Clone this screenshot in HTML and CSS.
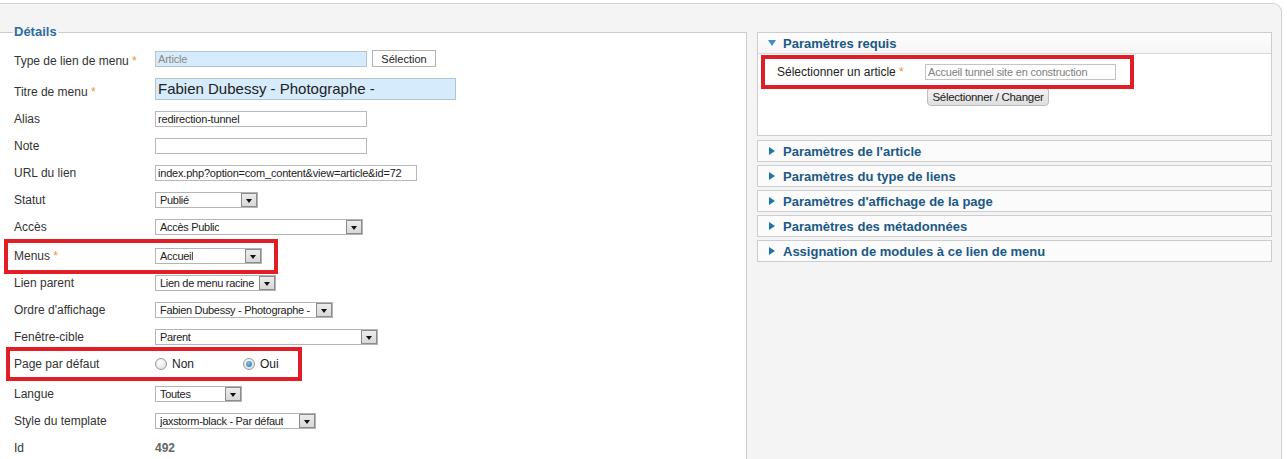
FILE: index.html
```html
<!DOCTYPE html>
<html lang="fr">
<head>
<meta charset="utf-8">
<title>Élément de menu</title>
<link rel="stylesheet" href="styles.css">
</head>
<body>
<div class="wrap">
  <fieldset class="details">
    <legend>Détails</legend>

    <div class="row first">
      <label class="lbl">Type de lien de menu <span class="star">*</span></label>
      <span class="input ro w212 dim">Article</span>
      <span class="btn-sel">Sélection</span>
    </div>
    <div class="row tall">
      <label class="lbl">Titre de menu <span class="star">*</span></label>
      <span class="input ro big">Fabien Dubessy - Photographe -</span>
    </div>
    <div class="row">
      <label class="lbl">Alias</label>
      <span class="input w212">redirection-tunnel</span>
    </div>
    <div class="row">
      <label class="lbl">Note</label>
      <span class="input w212"></span>
    </div>
    <div class="row">
      <label class="lbl">URL du lien</label>
      <span class="input w262">index.php?option=com_content&amp;view=article&amp;id=72</span>
    </div>
    <div class="row">
      <label class="lbl">Statut</label>
      <span class="select" style="width:103px"><span class="val">Publié</span><span class="arr"></span></span>
    </div>
    <div class="row">
      <label class="lbl">Accès</label>
      <span class="select" style="width:208px"><span class="val">Accès Public</span><span class="arr"></span></span>
    </div>
    <div class="row marked menus">
      <label class="lbl">Menus <span class="star">*</span></label>
      <span class="select" style="width:107px"><span class="val">Accueil</span><span class="arr"></span></span>
      <span class="redbox rb-menus"></span>
    </div>
    <div class="row">
      <label class="lbl">Lien parent</label>
      <span class="select" style="width:121px"><span class="val">Lien de menu racine</span><span class="arr"></span></span>
    </div>
    <div class="row">
      <label class="lbl">Ordre d'affichage</label>
      <span class="select" style="width:178px"><span class="val">Fabien Dubessy - Photographe -</span><span class="arr"></span></span>
    </div>
    <div class="row">
      <label class="lbl">Fenêtre-cible</label>
      <span class="select" style="width:223px"><span class="val">Parent</span><span class="arr"></span></span>
    </div>
    <div class="row marked">
      <label class="lbl">Page par défaut</label>
      <span class="radio"></span><span class="rtext">Non</span>
      <span class="radio on"></span><span class="rtext">Oui</span>
      <span class="redbox rb-page"></span>
    </div>
    <div class="row langue">
      <label class="lbl">Langue</label>
      <span class="select" style="width:87px"><span class="val">Toutes</span><span class="arr"></span></span>
    </div>
    <div class="row">
      <label class="lbl">Style du template</label>
      <span class="select" style="width:161px"><span class="val">jaxstorm-black - Par défaut</span><span class="arr"></span></span>
    </div>
    <div class="row">
      <label class="lbl">Id</label>
      <span class="idval">492</span>
    </div>
  </fieldset>

  <div class="side">
    <div class="panel open">
      <div class="phead"><span class="tri down"></span>Paramètres requis</div>
      <div class="pbody">
        <div class="req-row">
          <label class="req-lbl">Sélectionner un article <span class="star">*</span></label>
          <span class="input w190 grey">Accueil tunnel site en construction</span>
        </div>
        <div class="req-btn"><span class="btn-change">Sélectionner / Changer</span></div>
        <span class="redbox rb-req"></span>
      </div>
    </div>
    <div class="panel"><div class="phead"><span class="tri right"></span>Paramètres de l'article</div></div>
    <div class="panel"><div class="phead"><span class="tri right"></span>Paramètres du type de liens</div></div>
    <div class="panel"><div class="phead"><span class="tri right"></span>Paramètres d'affichage de la page</div></div>
    <div class="panel"><div class="phead"><span class="tri right"></span>Paramètres des métadonnées</div></div>
    <div class="panel"><div class="phead"><span class="tri right"></span>Assignation de modules à ce lien de menu</div></div>
  </div>
</div>
</body>
</html>
```

FILE: styles.css
```css
html, body {
  margin: 0;
  padding: 0;
  background: #fff;
  height: 459px;
  overflow: hidden;
}
body {
  padding-top: 3px;
  font-family: "Liberation Sans", Arial, sans-serif;
  font-size: 12px;
  color: #333;
}
.wrap {
  width: 1272px;
  height: 456px;
  border: 1px solid #d2d2d2;
  border-left: none;
  border-bottom: none;
  border-radius: 0 9px 0 0;
  background: #f4f4f4;
  padding: 20px 9px 0 0;
  display: flex;
  align-items: flex-start;
  gap: 10px;
  overflow: hidden;
  box-sizing: content-box;
}
.details {
  box-sizing: border-box;
  width: 747px;
  flex: none;
  margin: 0;
  padding: 5px 0 40px 14px;
  border: 1px solid #ccc;
  border-left: none;
  background: #fff;
  min-height: 450px;
}
.details legend {
  padding: 0 1px;
  margin-left: -1px;
  font-size: 13px;
  line-height: 16px;
  font-weight: bold;
  color: #2b6ca3;
}
.row {
  position: relative;
  display: flex;
  align-items: center;
  height: 27px;
}
.row.first .lbl { padding-top: 4px; }
.row.tall { height: 33px; }
.row.tall .lbl { padding-top: 6px; }
.row.menus { margin-top: 2px; }
.row.langue { margin-top: 3px; }
.lbl {
  width: 141px;
  flex: none;
  color: #333;
}
.star { color: #e8923a; }

.input {
  box-sizing: border-box;
  display: inline-flex;
  align-items: center;
  height: 16px;
  border: 1px solid #b9b9b9;
  background: #fff;
  padding: 0 2px;
  font-size: 11px;
  letter-spacing: -0.2px;
  color: #222;
  white-space: nowrap;
  overflow: hidden;
}
.w212 { width: 212px; }
.w262 { width: 262px; }
.w190 { width: 191px; }
.input.ro { background: #d6ebfb; border-color: #b4c3cf; }
.input.dim { color: #8a8a8a; }
.input.big {
  width: 301px;
  height: 22px;
  font-size: 15px;
  letter-spacing: 0;
  padding: 0 2px;
  color: #222;
}
.input.grey { color: #808080; border-color: #c4c4c4; }

.btn-sel {
  box-sizing: border-box;
  margin-left: 5px;
  width: 64px;
  height: 17px;
  border: 1px solid #b3b3b3;
  background: #fff;
  font-size: 11px;
  color: #222;
  display: inline-flex;
  align-items: center;
  justify-content: center;
}

.select {
  box-sizing: border-box;
  display: inline-flex;
  align-items: center;
  justify-content: space-between;
  height: 16px;
  border: 1px solid #b4b4b4;
  background: #fff;
  font-size: 11px;
  letter-spacing: -0.3px;
  color: #222;
  padding-left: 4px;
}
.select .val { white-space: nowrap; overflow: hidden; }
.select .arr {
  box-sizing: border-box;
  position: relative;
  flex: none;
  width: 16px;
  height: 14px;
  margin-left: 1px;
  border: 1px solid #8c8c8c;
  background: linear-gradient(#ececec, #d8d8d8);
}
.select .arr::after {
  content: "";
  position: absolute;
  left: 4px;
  top: 5px;
  border-left: 3px solid transparent;
  border-right: 3px solid transparent;
  border-top: 4px solid #111;
}

.radio {
  box-sizing: border-box;
  position: relative;
  width: 12px;
  height: 12px;
  border-radius: 50%;
  border: 1px solid #9a9a9a;
  background: radial-gradient(circle at 40% 35%, #fff, #dadada);
  flex: none;
}
.radio.on::after {
  content: "";
  position: absolute;
  left: 2px;
  top: 2px;
  width: 6px;
  height: 6px;
  border-radius: 50%;
  background: radial-gradient(circle at 40% 35%, #7cc4ef, #1c6fae);
}
.rtext { margin-left: 5px; width: 71px; font-size: 12px; color: #222; }
.idval { color: #666; font-weight: bold; }

.redbox {
  position: absolute;
  box-sizing: border-box;
  border: 4px solid #e11d25;
  pointer-events: none;
}
.rb-menus { left: -10px; top: -3px; width: 274px; height: 35px; }
.rb-page { left: -8px; top: -3px; width: 296px; height: 34px; }

.side {
  width: 515px;
  flex: none;
  margin-top: 8px;
  display: flex;
  flex-direction: column;
  gap: 3px;
}
.panel {
  border: 1px solid #cdcdcd;
  background: #fbfbfb;
}
.panel.open { margin-bottom: 1px; }
.phead {
  height: 20px;
  display: flex;
  align-items: center;
  padding-left: 10px;
  font-size: 13px;
  font-weight: bold;
  color: #1a5887;
}
.panel.open .phead {
  border-bottom: 1px solid #d8d8d8;
  background: linear-gradient(#fdfdfd, #f6f6f6);
}
.tri { width: 15px; height: 8px; position: relative; flex: none; }
.tri.down::before {
  content: "";
  position: absolute;
  left: 0;
  top: 1px;
  border-left: 4px solid transparent;
  border-right: 4px solid transparent;
  border-top: 6px solid #3a90cc;
}
.tri.right::before {
  content: "";
  position: absolute;
  left: 1px;
  top: 0;
  border-top: 4px solid transparent;
  border-bottom: 4px solid transparent;
  border-left: 6px solid #2073ad;
}
.pbody {
  position: relative;
  height: 81px;
  background: #fff;
  box-sizing: border-box;
  padding-top: 9px;
}
.req-row {
  display: flex;
  align-items: center;
  height: 18px;
  padding-left: 19px;
}
.req-lbl { width: 148px; flex: none; color: #222; }
.req-btn { padding: 6px 0 0 169px; }
.btn-change {
  box-sizing: border-box;
  display: inline-flex;
  align-items: center;
  justify-content: center;
  width: 122px;
  height: 19px;
  border: 1px solid #bdbdbd;
  border-radius: 4px;
  background: linear-gradient(#f5f5f5, #dedede);
  font-size: 11.5px;
  letter-spacing: -0.3px;
  white-space: nowrap;
  color: #222;
}
.rb-req { left: 3px; top: 1px; width: 373px; height: 34px; }
```
